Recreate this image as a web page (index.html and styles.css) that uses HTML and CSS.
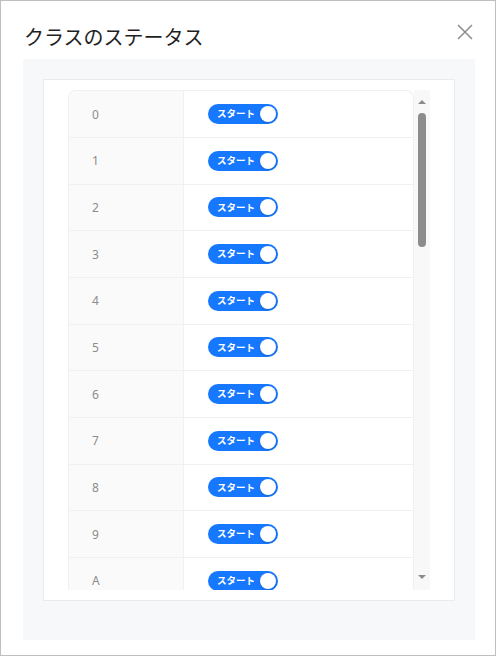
FILE: index.html
```html
<!DOCTYPE html>
<html lang="ja">
<head>
<meta charset="utf-8">
<link rel="stylesheet" href="styles.css">
</head>
<body>
<div class="dialog">
  <div class="header">
    <div class="title">クラスのステータス</div>
    <button class="close" aria-label="close">
      <svg width="16" height="16" viewBox="0 0 16 16"><path d="M1 1 L15 15 M15 1 L1 15" stroke="#8c8c8c" stroke-width="1.5" fill="none"/></svg>
    </button>
  </div>
  <div class="panel">
    <div class="box">
      <div class="scroller">
        <div class="table">
          <div class="row"><div class="key">0</div><div class="val"><span class="switch"><span class="label">スタート</span><span class="knob"></span></span></div></div>
          <div class="row"><div class="key">1</div><div class="val"><span class="switch"><span class="label">スタート</span><span class="knob"></span></span></div></div>
          <div class="row"><div class="key">2</div><div class="val"><span class="switch"><span class="label">スタート</span><span class="knob"></span></span></div></div>
          <div class="row"><div class="key">3</div><div class="val"><span class="switch"><span class="label">スタート</span><span class="knob"></span></span></div></div>
          <div class="row"><div class="key">4</div><div class="val"><span class="switch"><span class="label">スタート</span><span class="knob"></span></span></div></div>
          <div class="row"><div class="key">5</div><div class="val"><span class="switch"><span class="label">スタート</span><span class="knob"></span></span></div></div>
          <div class="row"><div class="key">6</div><div class="val"><span class="switch"><span class="label">スタート</span><span class="knob"></span></span></div></div>
          <div class="row"><div class="key">7</div><div class="val"><span class="switch"><span class="label">スタート</span><span class="knob"></span></span></div></div>
          <div class="row"><div class="key">8</div><div class="val"><span class="switch"><span class="label">スタート</span><span class="knob"></span></span></div></div>
          <div class="row"><div class="key">9</div><div class="val"><span class="switch"><span class="label">スタート</span><span class="knob"></span></span></div></div>
          <div class="row"><div class="key">A</div><div class="val"><span class="switch"><span class="label">スタート</span><span class="knob"></span></span></div></div>
        </div>
        <div class="scrollbar">
          <div class="sb-up"><span class="tri-up"></span></div>
          <div class="sb-thumb"></div>
          <div class="sb-space"></div>
          <div class="sb-down"><span class="tri-down"></span></div>
        </div>
      </div>
    </div>
  </div>
</div>
</body>
</html>
```

FILE: styles.css
```css
* { box-sizing: border-box; }
html, body { margin: 0; padding: 0; background: #fff; }
body { font-family: "Noto Sans", "Noto Sans CJK JP", sans-serif; }

.dialog {
  width: 496px;
  height: 656px;
  border: 1px solid #bfbfbf;
  background: #fff;
  display: flex;
  flex-direction: column;
}

.header {
  height: 58px;
  display: flex;
  justify-content: space-between;
  align-items: flex-start;
  padding: 22px 22px 0 23px;
}
.title {
  font-family: "Noto Sans CJK JP", sans-serif;
  font-size: 20px;
  line-height: 28px;
  color: #1f1f1f;
}
.close {
  margin-top: 1px;
  width: 16px;
  height: 16px;
  padding: 0;
  border: 0;
  background: none;
  display: flex;
}

.panel {
  margin: 0 20px 0 22px;
  height: 581px;
  background: #f7f8fa;
  padding: 20px 20px 39px 20px;
}

.box {
  height: 522px;
  background: #fff;
  border: 1px solid #ebebeb;
  padding: 10px 24px;
}

.scroller {
  height: 500px;
  display: flex;
  overflow: hidden;
}

.table {
  width: 346px;
  flex: none;
  border: 1px solid #f0f0f0;
  border-bottom: 0;
  border-radius: 8px 8px 0 0;
  overflow: hidden;
  align-self: flex-start;
}
.row {
  display: flex;
  height: 46.67px;
  border-bottom: 1px solid #f0f0f0;
}
.row:first-child { height: 47px; }
.key {
  width: 115px;
  flex: none;
  background: #fafafa;
  border-right: 1px solid #f0f0f0;
  display: flex;
  align-items: center;
  padding-left: 23px;
  font-size: 12px;
  color: #8c8c8c;
}
.val {
  flex: 1;
  display: flex;
  align-items: center;
  padding-left: 24px;
}
.switch {
  width: 70px;
  height: 20px;
  border-radius: 10px;
  background: #1677ff;
  display: flex;
  align-items: center;
  justify-content: space-between;
  padding: 0 2px 0 9px;
}
.label {
  font-family: "Noto Sans CJK JP", sans-serif;
  font-size: 9.5px;
  font-weight: 700;
  color: #fff;
  line-height: 1;
}
.knob {
  width: 16px;
  height: 16px;
  border-radius: 50%;
  background: #fff;
  box-shadow: 0 1px 2px rgba(0, 35, 11, 0.2);
}

.scrollbar {
  width: 16px;
  flex: none;
  background: #f8f8f8;
  display: flex;
  flex-direction: column;
  align-items: center;
}
.sb-up { height: 23px; padding-top: 10px; display: flex; justify-content: center; }
.sb-down { height: 23px; padding-top: 8px; display: flex; justify-content: center; }
.tri-up {
  width: 0; height: 0;
  border-left: 4px solid transparent;
  border-right: 4px solid transparent;
  border-bottom: 4px solid #8c8c8c;
}
.tri-down {
  width: 0; height: 0;
  border-left: 4px solid transparent;
  border-right: 4px solid transparent;
  border-top: 4px solid #8c8c8c;
}
.sb-thumb {
  width: 8px;
  height: 134px;
  border-radius: 4px;
  background: #8c8c8c;
}
.sb-space { flex: 1; }
```
